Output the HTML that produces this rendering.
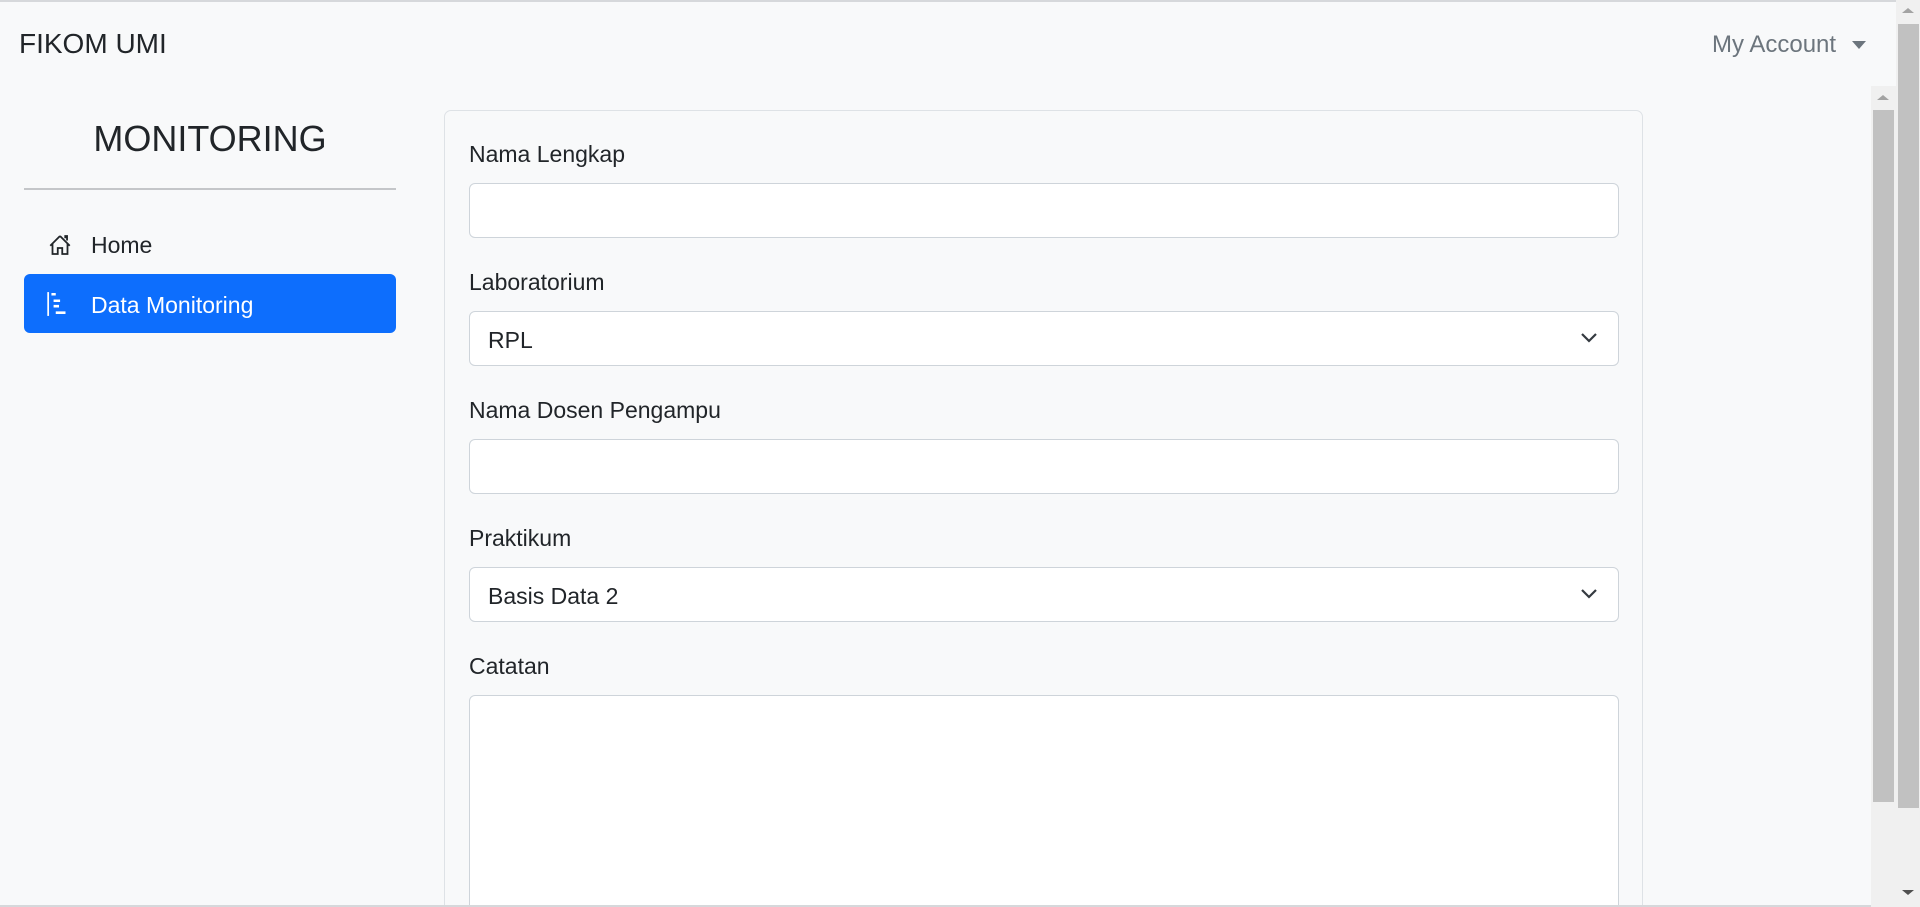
<!DOCTYPE html>
<html><head><meta charset="utf-8"><style>
*{box-sizing:border-box;margin:0;padding:0}
html,body{width:1920px;height:907px;overflow:hidden}
body{background:#f8f9fa;font-family:"Liberation Sans",sans-serif;color:#212529}
#w{position:relative;width:1920px;height:907px;overflow:hidden}
.t{position:absolute;white-space:nowrap}
.topline{position:absolute;left:0;top:0;width:1920px;height:2px;background:#d6d8db}
.brand{left:19px;top:28px;font-size:28px}
.acct{left:1712px;top:31px;font-size:24px;color:#6c757d}
.caret{position:absolute;left:1852px;top:41px;width:0;height:0;border-left:7px solid transparent;border-right:7px solid transparent;border-top:8px solid #6c757d}
.mon{left:24px;width:372px;text-align:center;top:118px;font-size:36px}
.hr{position:absolute;left:24px;top:188px;width:372px;height:2px;background:#c4c6c9}
.nav{font-size:23px;top:232px;left:91px}
.active{position:absolute;left:24px;top:274px;width:372px;height:59px;background:#0d6efd;border-radius:6px}
.card{position:absolute;left:444px;top:110px;width:1199px;height:820px;border:1px solid #dee2e6;border-radius:7px;background:#f8f9fa}
.lbl{left:469px;font-size:23px}
.inp{position:absolute;left:469px;width:1150px;height:55px;background:#fff;border:1px solid #ced4da;border-radius:6px}
.val{left:488px;font-size:23px}
.chev{position:absolute;left:1580px}
.sb1{position:absolute;left:1871px;top:86px;width:25px;height:821px;background:#f0f0f0}
.sb1 .th{position:absolute;left:2px;top:24px;width:21px;height:692px;background:#c1c1c1}
.sb2{position:absolute;left:1896px;top:0;width:24px;height:907px;background:#f0f0f0}
.sb2 .th{position:absolute;left:2px;top:24px;width:21px;height:784px;background:#c1c1c1}
.up{position:absolute;width:0;height:0;border-left:6px solid transparent;border-right:6px solid transparent;border-bottom:5px solid #a3a3a3}
.dn{position:absolute;width:0;height:0;border-left:6px solid transparent;border-right:6px solid transparent;border-top:5px solid #505050}
.bot{position:absolute;left:0;top:905px;width:1896px;height:2px;background:#d6d8db}
</style></head><body><div id="w">
<div class="topline"></div>
<div class="t brand">FIKOM UMI</div>
<div class="t acct">My Account</div>
<div class="caret"></div>
<div class="t mon">MONITORING</div>
<div class="hr"></div>
<svg style="position:absolute;left:48px;top:233px" width="24" height="24" viewBox="0 0 16 16"><path d="M8 2L1.5 8.5M8 2l6.5 6.5M3 7v7h3.5v-4h3v4H13V7M11.5 3.5V2h1.2v3" fill="none" stroke="#212529" stroke-width="1.2"/></svg>
<div class="t nav">Home</div>
<div class="active"></div>
<svg style="position:absolute;left:46px;top:291px" width="26" height="26" viewBox="0 0 24 24"><path d="M2 1v22" stroke="#fff" stroke-width="1.6"/><path d="M5 3h4M7 9h6M7 14h5M9 20h9" stroke="#fff" stroke-width="2.4"/></svg>
<div class="t nav" style="top:292px;color:#fff">Data Monitoring</div>
<div class="card"></div>
<div class="t lbl" style="top:141px">Nama Lengkap</div>
<div class="inp" style="top:183px"></div>
<div class="t lbl" style="top:269px">Laboratorium</div>
<div class="inp" style="top:311px"></div>
<div class="t val" style="top:327px">RPL</div>
<svg class="chev" style="top:330px" width="18" height="14" viewBox="0 0 18 14"><path d="M2 4l7 7 7-7" fill="none" stroke="#343a40" stroke-width="2.2"/></svg>
<div class="t lbl" style="top:397px">Nama Dosen Pengampu</div>
<div class="inp" style="top:439px"></div>
<div class="t lbl" style="top:525px">Praktikum</div>
<div class="inp" style="top:567px"></div>
<div class="t val" style="top:583px">Basis Data 2</div>
<svg class="chev" style="top:586px" width="18" height="14" viewBox="0 0 18 14"><path d="M2 4l7 7 7-7" fill="none" stroke="#343a40" stroke-width="2.2"/></svg>
<div class="t lbl" style="top:653px">Catatan</div>
<div class="inp" style="top:695px;height:240px"></div>
<div class="bot"></div>
<div class="sb1"><div class="up" style="left:6px;top:9px"></div><div class="th"></div></div>
<div class="sb2"><div class="up" style="left:6px;top:8px"></div><div class="th"></div><div class="dn" style="left:6px;top:890px"></div></div>
</div></body></html>
